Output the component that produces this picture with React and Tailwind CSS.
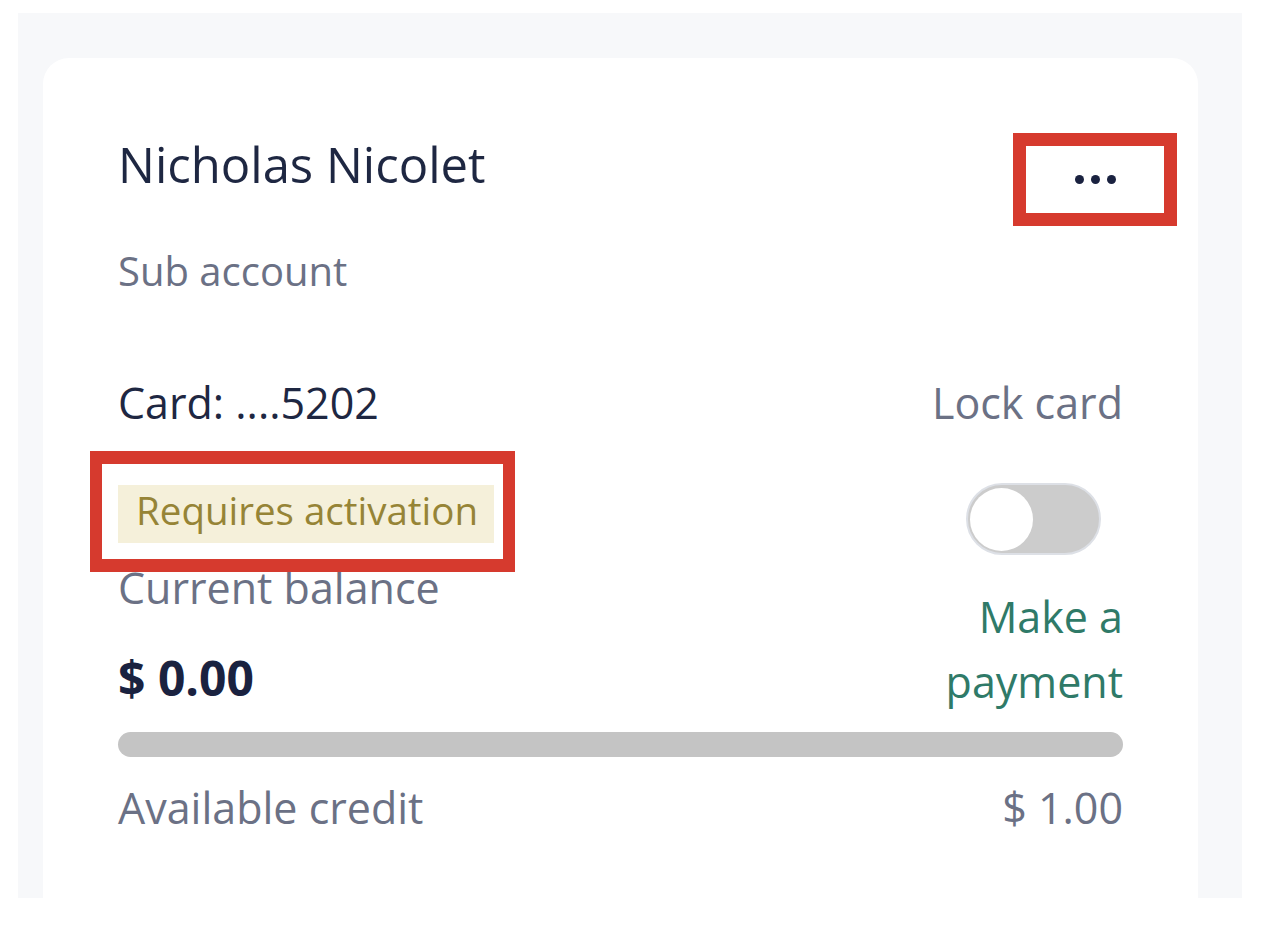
import React from "react";

export default function App() {
  return (
    <div
      className="min-h-[928px] bg-white pt-[13px] pl-[18px] pr-[38px]"
      style={{ fontFamily: '"Open Sans", "Noto Sans", sans-serif' }}
    >
      <div className="h-[885px] overflow-hidden bg-[#f7f8fa] pt-[45px] pl-[25px] pr-[44px]">
        <div className="relative h-[900px] rounded-t-[26px] bg-white px-[75px] pt-[76px]">
          {/* header */}
          <div className="text-[49px] leading-[60px] text-[#1e2742]">Nicholas Nicolet</div>
          <button className="absolute left-[970px] top-[75px] flex h-[93px] w-[164px] items-center justify-center gap-[7px] border-[13px] border-[#d63a2e] bg-white">
            <span className="h-[9px] w-[9px] rounded-full bg-[#1a2240]" />
            <span className="h-[9px] w-[9px] rounded-full bg-[#1a2240]" />
            <span className="h-[9px] w-[9px] rounded-full bg-[#1a2240]" />
          </button>
          <div className="mt-[50px] text-[40px] leading-[54px] text-[#6b7185]">Sub account</div>

          {/* card row */}
          <div className="mt-[76px] flex justify-between">
            <div className="flex flex-col items-start">
              <div className="text-[43px] leading-[58px] text-[#1e2742]">Card: ....5202</div>
              <div className="relative mt-[53px] bg-[#f5f0da] pl-[18px] pr-[16px] pb-[8px] text-[38.5px] leading-[50px] text-[#968436]">
                Requires activation
                <span className="absolute -left-[28px] -right-[21px] -top-[34px] -bottom-[29px] border-x-[12px] border-y-[13px] border-[#d63a2e]" />
              </div>
              <div className="mt-[16px] text-[43px] leading-[58px] text-[#6b7185]">Current balance</div>
              <div className="mt-[31px] text-[48px] font-bold leading-[60px] text-[#1a2240]">$ 0.00</div>
            </div>
            <div className="flex w-[210px] flex-col items-end text-right">
              <div className="whitespace-nowrap text-[43px] leading-[58px] text-[#6b7185]">Lock card</div>
              <div className="mr-[22px] mt-[51px] flex h-[72px] w-[135px] items-center rounded-full border-2 border-[#dde0e6] bg-[#cccccc] px-[2px]">
                <span className="h-[63px] w-[63px] rounded-full bg-white" />
              </div>
              <div className="mt-[29px] text-[43px] leading-[65px] text-[#2f7a68]">
                Make a<br />payment
              </div>
            </div>
          </div>

          <div className="mt-[18px] h-[25px] rounded-full bg-[#c4c4c4]" />

          <div className="mt-[22px] flex justify-between text-[43px] leading-[58px] text-[#6b7185]">
            <span>Available credit</span>
            <span>$ 1.00</span>
          </div>
        </div>
      </div>
    </div>
  );
}
